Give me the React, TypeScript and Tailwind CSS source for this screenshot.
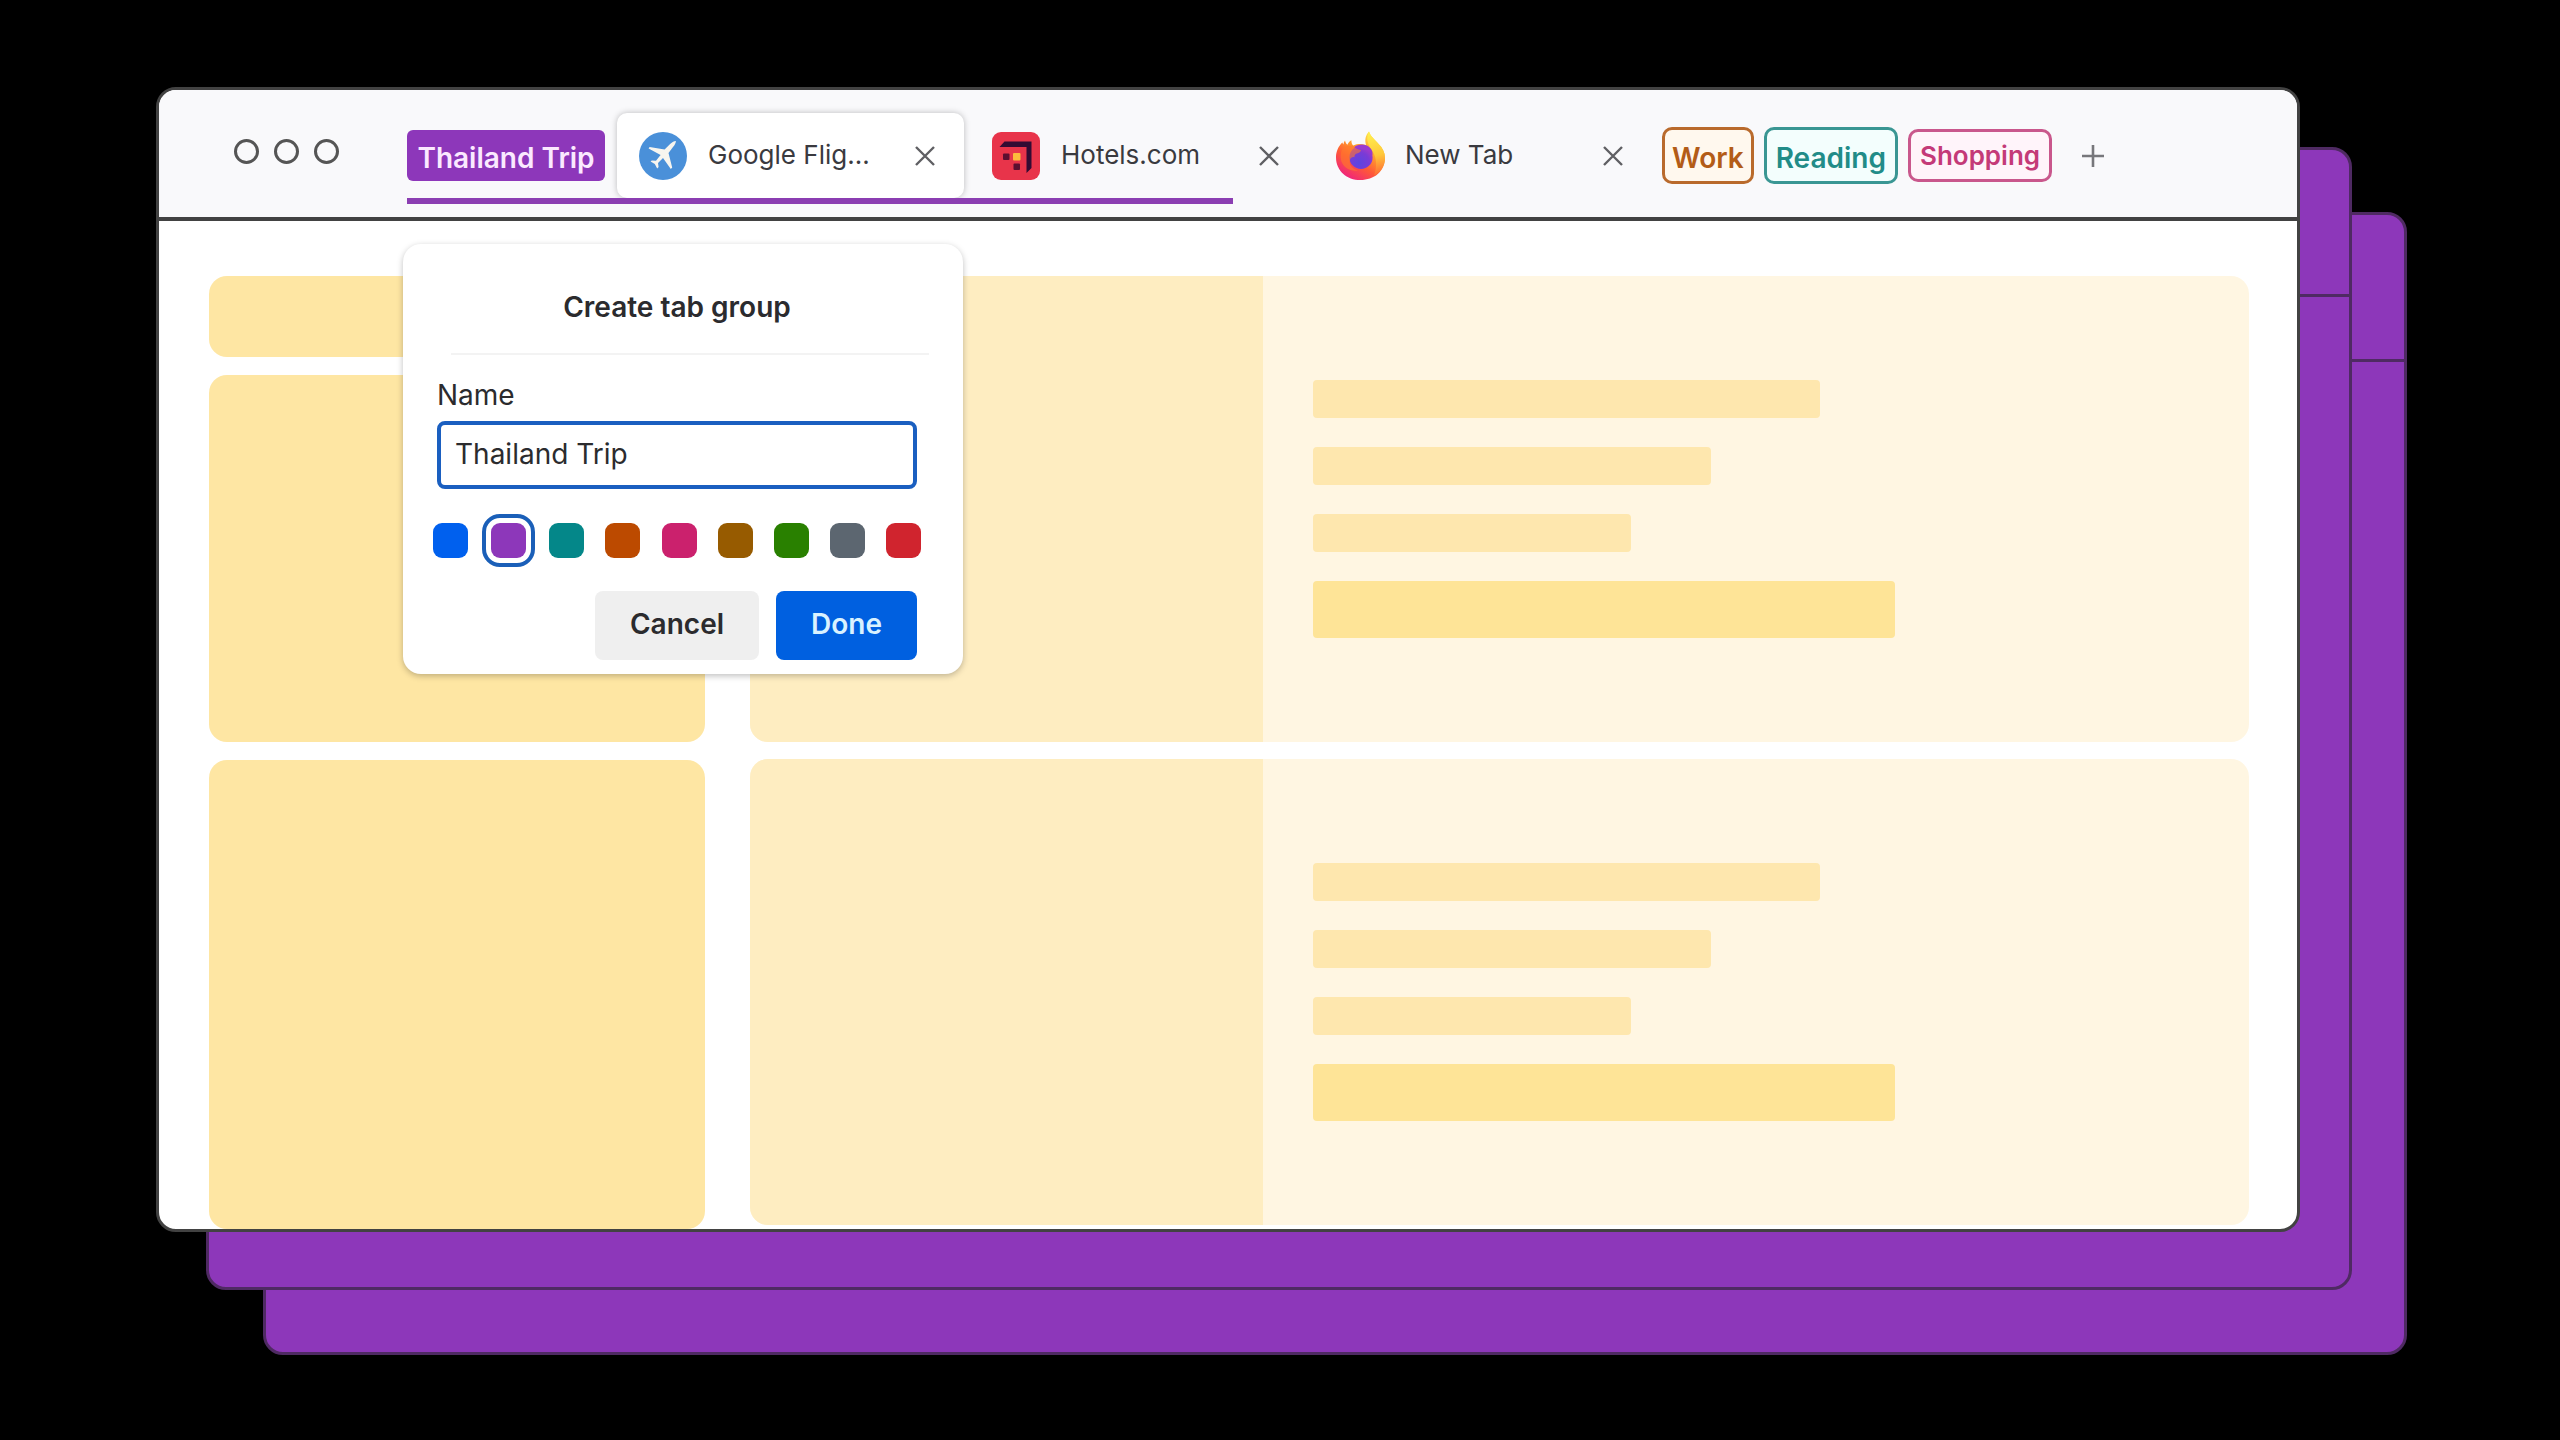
import { ReactNode, useState } from "react";
import clsx from "clsx";

interface ITab {
  title: string;
  icon: ReactNode;
  active?: boolean;
}

const PlaneIcon = () => (
  <svg className="size-12 shrink-0" viewBox="0 0 48 48" aria-hidden="true">
    <circle cx="24" cy="24" r="24" fill="#4a90d9" />
    <path
      d="M37 9C36.6 11.6 35.6 13.2 34 15L29.5 21L33.2 35.6L31.8 37L24 26L19 31L19.6 35L18.2 36.4L15.8 32L11.6 29.6L12.8 28.6L17 28.8L21.6 23L9.6 16.4L10.6 15L25.6 17.4L31.4 11.8C33.2 10.2 34.8 9.2 37 9Z"
      fill="#f7f5ef"
    />
  </svg>
);

const HotelsIcon = () => (
  <svg className="size-12 shrink-0" viewBox="0 0 48 48" aria-hidden="true">
    <rect width="48" height="48" rx="9" fill="#e8344a" />
    {/* bracket open to the bottom left */}
    <path d="M7.5 15L12.5 9.5H39.5V36L34.5 41V15Z" fill="#330b33" />
    <rect x="11" y="21.5" width="6.5" height="6.5" rx="1" fill="#5c0f30" />
    <rect x="21.5" y="31.5" width="6.5" height="6.5" rx="1" fill="#5c0f30" />
    <rect x="21" y="21" width="7.5" height="7.5" rx="1" fill="#fdb93c" />
  </svg>
);

const FirefoxIcon = () => (
  <svg className="size-12 shrink-0 overflow-visible" viewBox="0 0 48 48" aria-hidden="true">
    <defs>
      <linearGradient id="fox-body" x1="0.8" y1="0.1" x2="0.25" y2="0.95">
        <stop offset="0" stopColor="#ffe14a" />
        <stop offset="0.35" stopColor="#ffa02e" />
        <stop offset="0.65" stopColor="#ff5a36" />
        <stop offset="1" stopColor="#f0267a" />
      </linearGradient>
      <linearGradient id="fox-tail" x1="0.4" y1="0" x2="0.5" y2="1">
        <stop offset="0" stopColor="#fff04f" />
        <stop offset="0.55" stopColor="#ffc83a" />
        <stop offset="1" stopColor="#ff6a35" />
      </linearGradient>
      <radialGradient id="fox-globe" cx="0.4" cy="0.75" r="0.8">
        <stop offset="0" stopColor="#5b45e0" />
        <stop offset="0.6" stopColor="#7a3bd6" />
        <stop offset="1" stopColor="#b03bc4" />
      </radialGradient>
    </defs>
    <path
      d="M9 8.5C9.6 10.6 10.2 11.6 11.4 12.8C12.4 10.4 13.6 9 15.4 8.2C15.4 10.6 16 12.4 17.4 13.6C22 11.4 26 12 30 13C28.6 8 29.4 3.6 33 -0.4C34.6 4.6 38.6 7.4 42.6 12C46.6 16 49 20.6 49 26C49 39.4 38 48 24.4 48C10.8 48 0 38.6 0 25.4C0 19.4 2.6 14 6.4 10.6C6.8 11.6 7 12 7.4 12.6C7.6 11 8.2 9.6 9 8.5Z"
      fill="url(#fox-body)"
    />
    <path
      d="M33 -0.4C34.6 4.6 38.6 7.4 42.6 12C46.6 16 49 20.6 49 26C49 34 44 40.6 38 43.4C41 36 41 27 37 20C34 15 28.4 9 33 -0.4Z"
      fill="url(#fox-tail)"
    />
    <circle cx="25" cy="25.4" r="11.6" fill="url(#fox-globe)" />
    <path d="M18 15.4C22 11.8 29.6 11.6 33.4 15.2C36 17.6 37 20.4 36.4 23C34 19.4 31 17.6 27 17.4Z" fill="#9a3bd0" />
    <path
      d="M7 16C10 13.6 14.4 13.2 17.6 14.2C19.4 16.4 21.6 17.2 25 18C24.8 20.4 22.6 21 20 21.8C18.6 22.6 18.6 23.8 18.4 25.2C16.4 24.6 14.8 25.6 14 27.6C12.6 32.4 16 37 22 38.4C15 40 8 36 5.6 30C4 25 4.4 19.6 7 16Z"
      fill="#ff7a2b"
      fillOpacity="0.6"
    />
  </svg>
);

const CloseIcon = () => (
  <svg className="size-5" viewBox="0 0 20 20" fill="none" stroke="currentColor" strokeWidth="2.4" aria-hidden="true">
    <path d="M1 1L19 19M19 1L1 19" />
  </svg>
);

const groupTabs: ITab[] = [
  { title: "Google Flig...", icon: <PlaneIcon />, active: true },
  { title: "Hotels.com", icon: <HotelsIcon /> },
];

const savedGroups = [
  { name: "Work", style: "h-[57px] border-[#b96a2c] bg-[#fff8ee] px-[7px] pt-1 text-[28px] text-[#b35c17]" },
  { name: "Reading", style: "h-[57px] border-[#3a9693] bg-[#f3fefd] px-[9px] pt-1 text-[28px] text-[#218c88]" },
  { name: "Shopping", style: "h-[53px] border-[#c9578c] bg-[#fff4fa] px-[9px] text-[26px] text-[#c43a78]" },
];

const colors = [
  { name: "Blue", style: "bg-[#0060ee]" },
  { name: "Purple", style: "bg-[#8d37ba]" },
  { name: "Teal", style: "bg-[#048789]" },
  { name: "Orange", style: "bg-[#bc4a00]" },
  { name: "Pink", style: "bg-[#cb216d]" },
  { name: "Brown", style: "bg-[#975b00]" },
  { name: "Green", style: "bg-[#298000]" },
  { name: "Gray", style: "bg-[#5c6670]" },
  { name: "Red", style: "bg-[#d0242e]" },
];

const Tab = ({ title, icon, active }: ITab) => (
  <div
    className={clsx(
      "flex h-[85px] items-center gap-[21px] rounded-[10px] pr-[29px] pl-[22px]",
      active ? "w-[347px] bg-white shadow-[0_0_6px_rgba(0,0,0,0.25)]" : "w-[338px]"
    )}
  >
    {icon}
    <span className="flex-1 pb-0.5 text-[26px] whitespace-nowrap text-[#3a3a3f]">{title}</span>
    <button type="button" aria-label={`Close ${title}`} className="text-[#5f5f63]">
      <CloseIcon />
    </button>
  </div>
);

const TabStrip = () => (
  <header className="flex h-[131px] items-center border-b-4 border-[#424242] bg-[#f9f9fb] pb-1 pl-[75px]">
    <div className="flex gap-[15px]">
      <span className="size-[25px] rounded-full border-[3px] border-[#555]" />
      <span className="size-[25px] rounded-full border-[3px] border-[#555]" />
      <span className="size-[25px] rounded-full border-[3px] border-[#555]" />
    </div>
    <nav className="ml-[68px] flex items-center gap-2.5 pt-2">
      <div className="relative flex items-center gap-1.5">
        <button
          type="button"
          className="mr-1.5 h-[51px] w-[198px] rounded-md bg-[#8d37ba] pt-1 text-[28px] leading-9 font-semibold whitespace-nowrap text-[#fbe9ff]"
        >
          Thailand Trip
        </button>
        {groupTabs.map((tab) => (
          <Tab key={tab.title} {...tab} />
        ))}
        <Tab title="New Tab" icon={<FirefoxIcon />} />
        <div className="absolute top-full left-0 h-1.5 w-[826px] bg-[#8b3eb2]" />
      </div>
      {savedGroups.map((group) => (
        <button
          key={group.name}
          type="button"
          className={clsx("rounded-[10px] border-[3px] leading-9 font-semibold", group.style)}
        >
          {group.name}
        </button>
      ))}
      <button type="button" aria-label="Open a new tab" className="ml-5 text-[#77777b]">
        <svg className="size-[22px]" viewBox="0 0 22 22" fill="none" stroke="currentColor" strokeWidth="2.6" aria-hidden="true">
          <path d="M11 0V22M0 11H22" />
        </svg>
      </button>
    </nav>
  </header>
);

const CreateGroupDialog = () => {
  const [name, setName] = useState("Thailand Trip");
  const [color, setColor] = useState("Purple");

  return (
    <form
      role="dialog"
      aria-labelledby="dialog-title"
      className="absolute top-[23px] left-[244px] w-[560px] rounded-[18px] bg-white pt-[45px] pr-[46px] pb-3.5 pl-[34px] text-[28px] leading-9 text-[#2b2b2e] shadow-[0_2px_6px_rgba(0,0,0,0.25)]"
      onSubmit={(e) => e.preventDefault()}
    >
      <h2 id="dialog-title" className="text-center font-semibold">
        Create tab group
      </h2>
      <hr className="mt-7 -mr-3 ml-3.5 border-t-2 border-[#f3f3f3]" />
      <label htmlFor="group-name" className="mt-[22px] block">
        Name
      </label>
      <input
        id="group-name"
        type="text"
        value={name}
        onChange={(e) => setName(e.target.value)}
        className="mt-2 h-[68px] w-full rounded-lg border-4 border-[#1a5fc0] bg-white px-3.5 pb-0.5 outline-none"
      />
      <fieldset className="-mx-1 mt-[34px] flex justify-between">
        {colors.map((c) => (
          <input
            key={c.name}
            type="radio"
            name="group-color"
            aria-label={c.name}
            checked={color === c.name}
            onChange={() => setColor(c.name)}
            className={clsx(
              "size-[35px] appearance-none rounded-[9px] outline-offset-[5px] outline-[#1a5fb8] checked:mx-0.5 checked:outline-4",
              c.style
            )}
          />
        ))}
      </fieldset>
      <div className="mt-[33px] flex justify-end gap-[17px] font-semibold">
        <button type="button" className="h-[69px] rounded-lg bg-[#efefef] px-[35px] pb-1">
          Cancel
        </button>
        <button type="submit" className="h-[69px] rounded-lg bg-[#0060e0] px-[35px] pb-1 text-[#d9f2ff]">
          Done
        </button>
      </div>
    </form>
  );
};

const ResultCard = () => (
  <div className="flex flex-1 overflow-hidden rounded-[18px] bg-[#fff6e2]">
    <div className="w-[513px] bg-[#feedc1]" />
    <div className="flex flex-col justify-center gap-[29px] pl-[50px]">
      <div className="h-[38px] w-[507px] rounded-sm bg-[#fee7ae]" />
      <div className="h-[38px] w-[398px] rounded-sm bg-[#fee7ae]" />
      <div className="h-[38px] w-[318px] rounded-sm bg-[#fee7ae]" />
      <div className="h-[57px] w-[582px] rounded-sm bg-[#fee497]" />
    </div>
  </div>
);

const BackWindow = ({ className }: { className: string }) => (
  <div className={clsx("absolute rounded-[20px] border-[3px] border-[#4f2a63] bg-[#8d37ba]", className)}>
    <div className="h-[147px] border-b-[3px] border-[#4f2a63]" />
  </div>
);

export default function App() {
  return (
    <div className="flex min-h-screen bg-black pt-[87px] pr-[260px] pb-[208px] pl-[156px] font-['Inter',sans-serif]">
      <div className="relative flex flex-1">
        <BackWindow className="top-[125px] -right-[107px] -bottom-[123px] left-[107px]" />
        <BackWindow className="top-[60px] -right-[52px] -bottom-[58px] left-[50px]" />
        <div className="relative flex flex-1 flex-col overflow-hidden rounded-[20px] border-[3px] border-[#424242] bg-white">
          <TabStrip />
          <main className="relative flex flex-1 gap-[45px] pt-[55px] pr-12 pl-[50px]">
            <div className="flex w-[496px] flex-col gap-[18px]">
              <div className="h-[81px] rounded-[18px] bg-[#fee6a3]" />
              <div className="h-[367px] rounded-[18px] bg-[#fee6a3]" />
              <div className="flex-1 rounded-[18px] bg-[#fee6a3]" />
            </div>
            <div className="flex flex-1 flex-col gap-[17px] pb-1">
              <ResultCard />
              <ResultCard />
            </div>
            <CreateGroupDialog />
          </main>
        </div>
      </div>
    </div>
  );
}
